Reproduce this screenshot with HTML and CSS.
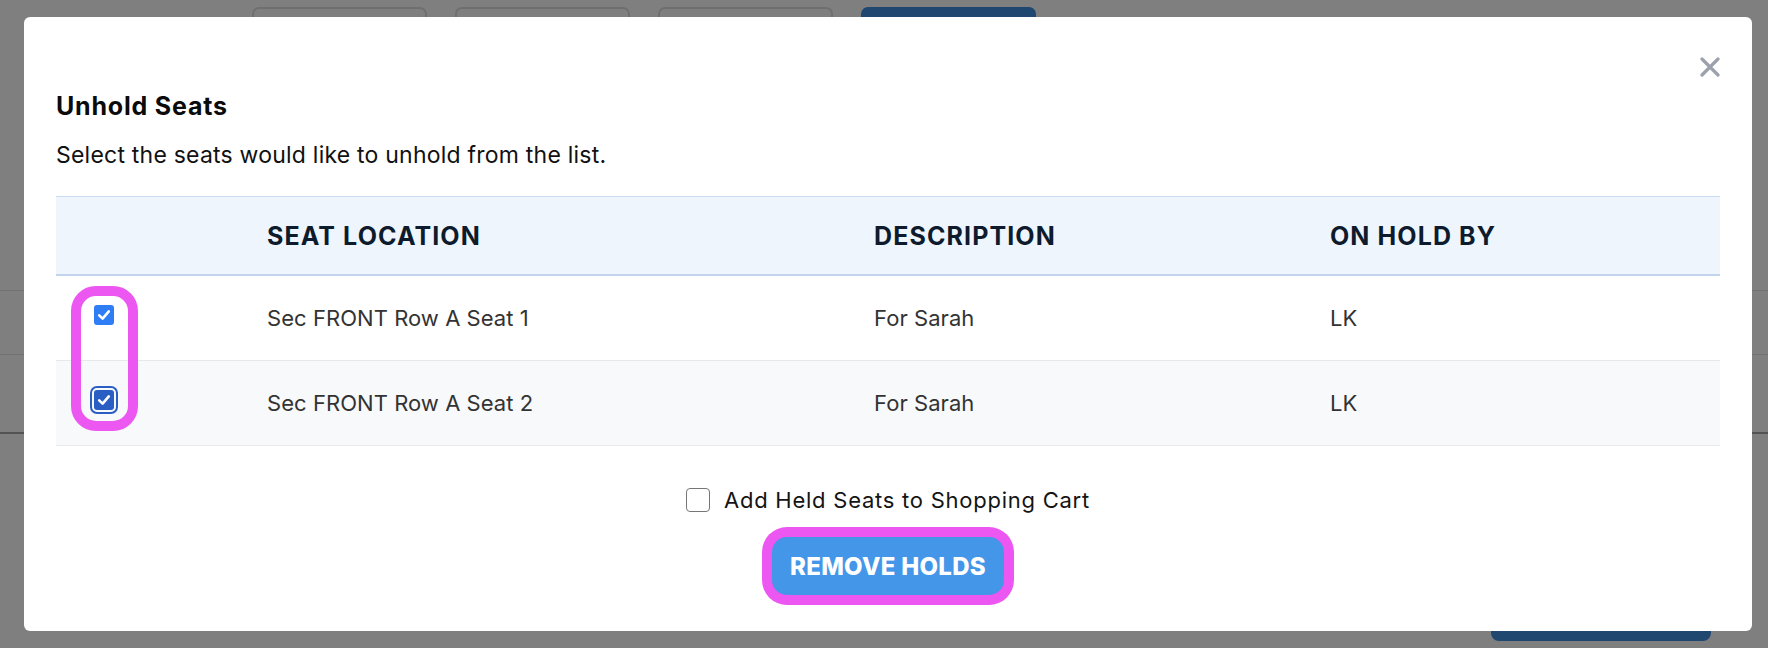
FILE: index.html
```html
<!DOCTYPE html>
<html lang="en">
<head>
<meta charset="utf-8">
<title>Unhold Seats</title>
<link rel="stylesheet" href="styles.css">
</head>
<body>
<div class="page">
  <div class="toolbar">
    <span class="tb-btn"></span>
    <span class="tb-btn"></span>
    <span class="tb-btn"></span>
    <span class="tb-btn tb-primary"></span>
  </div>
  <div class="page-lines">
    <div class="pline pline-1"></div>
    <div class="pline pline-2"></div>
    <div class="pline pline-3"></div>
  </div>
  <div class="page-footer"><span class="footer-btn"></span></div>
</div>

<div class="overlay">
  <div class="modal">
    <div class="modal-top">
      <button class="close" aria-label="Close">
        <svg width="20" height="20" viewBox="0 0 20 20"><path d="M2 2 L18 18 M18 2 L2 18" stroke="#9ca1ad" stroke-width="3.2" stroke-linecap="round" fill="none"/></svg>
      </button>
    </div>
    <h2 class="title">Unhold Seats</h2>
    <p class="subtitle">Select the seats would like to unhold from the list.</p>

    <div class="table">
      <div class="row row-head">
        <div class="cell"></div>
        <div class="cell">SEAT LOCATION</div>
        <div class="cell">DESCRIPTION</div>
        <div class="cell">ON HOLD BY</div>
      </div>
      <div class="row">
        <div class="cell cell-cb"><span class="cb"><svg width="20" height="20" viewBox="0 0 20 20"><path d="M5.2 10.4 L8.6 13.6 L14.8 6.4" stroke="#fff" stroke-width="2.6" stroke-linecap="round" stroke-linejoin="round" fill="none"/></svg></span></div>
        <div class="cell">Sec FRONT Row A Seat 1</div>
        <div class="cell">For Sarah</div>
        <div class="cell">LK</div>
      </div>
      <div class="row row-alt">
        <div class="cell cell-cb"><span class="cb cb-focus"><svg width="20" height="20" viewBox="0 0 20 20"><path d="M5.2 10.4 L8.6 13.6 L14.8 6.4" stroke="#fff" stroke-width="2.6" stroke-linecap="round" stroke-linejoin="round" fill="none"/></svg></span></div>
        <div class="cell">Sec FRONT Row A Seat 2</div>
        <div class="cell">For Sarah</div>
        <div class="cell">LK</div>
      </div>
      <span class="annot annot-cb"></span>
    </div>

    <label class="cart"><span class="cart-box"></span><span class="cart-text">Add Held Seats to Shopping Cart</span></label>
    <div class="actions"><button class="remove">REMOVE HOLDS</button></div>
  </div>
</div>
</body>
</html>
```
FILE: styles.css
```css
* { box-sizing: border-box; }

html, body {
  margin: 0;
  padding: 0;
  width: 1768px;
  height: 648px;
  overflow: hidden;
  background: #ffffff;
  font-family: Inter, "Liberation Sans", sans-serif;
}

/* background page (dimmed by overlay) */
.page {
  height: 648px;
  display: flex;
  flex-direction: column;
}
.toolbar {
  display: flex;
  gap: 28px;
  padding: 7px 0 0 252px;
}
.tb-btn {
  width: 175px;
  height: 40px;
  border: 2px solid #dedede;
  border-radius: 7px;
  background: #fff;
}
.tb-primary {
  background: #3f8fe0;
  border-color: #3f8fe0;
}
.page-lines {
  margin-top: 243px;
}
.pline { height: 1px; background: #e4e4e4; }
.pline-2 { margin-top: 63px; }
.pline-3 { margin-top: 77px; height: 2px; background: #a8a8a8; }
.page-footer {
  display: flex;
  justify-content: flex-end;
  padding-right: 57px;
  margin-top: 159px;
}
.footer-btn {
  width: 220px;
  height: 48px;
  border-radius: 8px;
  background: #3f8fe0;
}

/* overlay + modal */
.overlay {
  position: fixed;
  inset: 0;
  background: rgba(0, 0, 0, 0.5);
  padding: 17px 16px 0 24px;
}
.modal {
  background: #fff;
  border-radius: 6px;
  padding: 40px 32px 36px;
}
.modal-top {
  display: flex;
  justify-content: flex-end;
  height: 20px;
}
.close {
  border: 0;
  background: none;
  padding: 0;
  width: 20px;
  height: 20px;
  display: block;
  cursor: pointer;
}
.close svg { display: block; }

.title {
  margin: 14px 0 0;
  font-size: 25px;
  line-height: 30px;
  font-weight: 650;
  letter-spacing: 0.8px;
  color: #0b0b0b;
}
.subtitle {
  margin: 20px 0 0;
  font-size: 23px;
  line-height: 28px;
  font-weight: 400;
  letter-spacing: 0.22px;
  color: #111;
}

.table {
  position: relative;
  margin-top: 27px;
}
.row {
  display: grid;
  grid-template-columns: 211px 607px 456px 1fr;
  height: 85px;
  border-bottom: 1px solid #e6e8ec;
  font-size: 22px;
  color: #333;
  letter-spacing: 0.05px;
}
.row-alt { background: #f8f9fb; }
.row-head {
  height: 80px;
  background: #eff5fd;
  border-top: 1px solid #c8daf0;
  border-bottom: 2px solid #c3d5ee;
  font-size: 25px;
  font-weight: 700;
  color: #0e1b2d;
  letter-spacing: 1.1px;
}
.cell {
  display: flex;
  align-items: center;
  white-space: nowrap;
}
.cell-cb {
  align-items: flex-start;
  padding: 29px 0 0 38px;
}
.cb {
  width: 20px;
  height: 20px;
  border-radius: 3px;
  background: #2f7df5;
  display: block;
}
.cb svg { display: block; }
.cb-focus {
  background: #2b5ec3;
  outline: 2.5px solid #2b5ec3;
  outline-offset: 2px;
}

/* annotation highlight */
.annot {
  position: absolute;
  border: 10px solid #ec56f1;
  border-radius: 25px;
  pointer-events: none;
}
.annot-cb {
  left: 15px;
  top: 90px;
  width: 67px;
  height: 145px;
}

.cart {
  display: flex;
  align-items: center;
  justify-content: center;
  gap: 14px;
  margin-top: 42px;
  height: 23px;
  font-size: 22px;
  color: #141414;
  letter-spacing: 0.75px;
}
.cart-box {
  width: 24px;
  height: 24px;
  border: 1.5px solid #767676;
  border-radius: 4px;
  background: #fff;
}
.actions {
  display: flex;
  justify-content: center;
  margin-top: 26px;
}
.remove {
  width: 232px;
  height: 58px;
  border: 0;
  border-radius: 15px;
  background: #4496e9;
  color: #fff;
  font-family: Inter, "Liberation Sans", sans-serif;
  font-size: 24px;
  font-weight: 850;
  letter-spacing: 0.3px;
  box-shadow: 0 0 0 10px #ec56f1;
  padding: 0;
}
```
